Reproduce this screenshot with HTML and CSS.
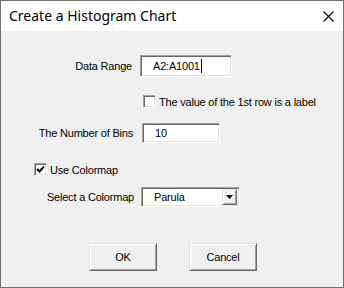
FILE: index.html
```html
<!DOCTYPE html>
<html lang="en">
  <head>
    <meta charset="UTF-8" />
    <title>Create a Histogram Chart</title>
    <link rel="stylesheet" href="styles.css">
  </head>
  <body>
    <div class="window">
      <div class="titlebar">
        <span class="title">Create a Histogram Chart</span>
        <span class="close">
          <svg width="11" height="11" viewBox="0 0 11 11">
            <path d="M0.5 0.5 L10.5 10.5 M10.5 0.5 L0.5 10.5" stroke="#000" stroke-width="1.1" fill="none" />
          </svg>
        </span>
      </div>

      <div class="content">
        <!-- Диапазон данных -->
        <div class="row row-range">
          <label class="lbl lbl-range">Data Range</label>
          <div class="field field-range">A2:A1001<span class="caret"></span></div>
        </div>

        <div class="row row-check1">
          <span class="check"></span>
          <span class="check-text">The value of the 1st row is a label</span>
        </div>

        <div class="row row-bins">
          <label class="lbl lbl-bins">The Number of Bins</label>
          <div class="field field-bins">10</div>
        </div>

        <div class="row row-check2">
          <span class="check">
            <svg width="9" height="9" viewBox="0 0 9 9">
              <path d="M1 4 L3.5 6.5 L8 1.5" stroke="#000" stroke-width="2" fill="none" />
            </svg>
          </span>
          <span class="check-text">Use Colormap</span>
        </div>

        <div class="row row-select">
          <label class="lbl lbl-select">Select a Colormap</label>
          <div class="select">
            <span class="select-value">Parula</span>
            <span class="drop">
              <svg width="7" height="4" viewBox="0 0 7 4">
                <path d="M0 0 L7 0 L3.5 4 Z" fill="#000" />
              </svg>
            </span>
          </div>
        </div>

        <div class="buttons">
          <div class="btn">OK</div>
          <div class="btn">Cancel</div>
        </div>
      </div>
    </div>
  </body>
</html>
```

FILE: styles.css
```css
body {
  margin: 0;
  font-family: "Liberation Sans", Arial, sans-serif;
  font-size: 11px;
  letter-spacing: -0.2px;
  color: #000;
}

.window {
  width: 342px;
  height: 286px;
  border: 1px solid #707070;
  background-color: #f0f0f0;
}

.titlebar {
  height: 30px;
  background-color: #fff;
  display: flex;
  align-items: center;
  justify-content: space-between;
  letter-spacing: 0;
}

.title {
  font-family: "Noto Sans", sans-serif;
  font-size: 14px;
  margin-left: 8px;
  margin-top: -1px;
}

.close {
  display: flex;
  margin-right: 9px;
}

.row {
  display: flex;
  align-items: center;
}

.lbl {
  text-align: right;
}

.row-range {
  margin-top: 24px;
  height: 22px;
}

.lbl-range {
  width: 131px;
  margin-right: 8px;
}

.row-check1 {
  margin-top: 18px;
  height: 13px;
  padding-left: 142px;
}

.row-bins {
  margin-top: 15px;
  height: 20px;
}

.lbl-bins {
  width: 132px;
  margin-right: 9px;
}

.row-check2 {
  margin-top: 20px;
  height: 13px;
  padding-left: 33px;
}

.row-select {
  margin-top: 11px;
  height: 20px;
}

.lbl-select {
  width: 133px;
  margin-right: 7px;
}

/* вдавленная рамка полей */
.field,
.select,
.check {
  box-sizing: border-box;
  background-color: #fff;
  border-top: 1px solid #a0a0a0;
  border-left: 1px solid #a0a0a0;
  border-right: 1px solid #fff;
  border-bottom: 1px solid #fff;
  box-shadow: inset 1px 1px 0 #696969, inset -1px -1px 0 #e3e3e3;
}

.field {
  display: flex;
  align-items: center;
  padding-left: 12px;
}

.field-range {
  width: 92px;
  height: 22px;
}

.field-bins {
  width: 78px;
  height: 20px;
}

.caret {
  display: inline-block;
  width: 1px;
  height: 14px;
  background-color: #000;
  margin-left: 1px;
}

.check {
  width: 13px;
  height: 13px;
  display: flex;
  align-items: center;
  justify-content: center;
}

.check-text {
  margin-left: 3px;
}

.select {
  width: 99px;
  height: 20px;
  display: flex;
  align-items: center;
  justify-content: space-between;
  padding-left: 12px;
  padding-right: 2px;
}

.drop {
  width: 15px;
  height: 16px;
  box-sizing: border-box;
  display: flex;
  align-items: center;
  justify-content: center;
  background-color: #f0f0f0;
  border-top: 1px solid #e3e3e3;
  border-left: 1px solid #e3e3e3;
  border-right: 1px solid #696969;
  border-bottom: 1px solid #696969;
  box-shadow: inset 1px 1px 0 #fff, inset -1px -1px 0 #a0a0a0;
}

.buttons {
  margin-top: 36px;
  padding-left: 88px;
  display: flex;
  gap: 32px;
}

.btn {
  width: 68px;
  height: 28px;
  box-sizing: border-box;
  display: flex;
  align-items: center;
  justify-content: center;
  background-color: #f0f0f0;
  border-top: 1px solid #e3e3e3;
  border-left: 1px solid #e3e3e3;
  border-right: 1px solid #696969;
  border-bottom: 1px solid #696969;
  box-shadow: inset 1px 1px 0 #fff, inset -1px -1px 0 #a0a0a0;
}
```
